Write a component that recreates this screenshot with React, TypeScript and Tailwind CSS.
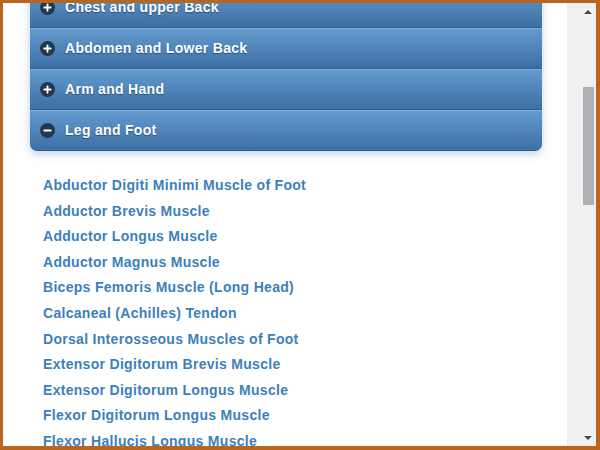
import { Plus, Minus } from "lucide-react";

const regions = [
  { label: "Chest and upper Back", open: false },
  { label: "Abdomen and Lower Back", open: false },
  { label: "Arm and Hand", open: false },
  { label: "Leg and Foot", open: true },
];

const muscles = [
  "Abductor Digiti Minimi Muscle of Foot",
  "Adductor Brevis Muscle",
  "Adductor Longus Muscle",
  "Adductor Magnus Muscle",
  "Biceps Femoris Muscle (Long Head)",
  "Calcaneal (Achilles) Tendon",
  "Dorsal Interosseous Muscles of Foot",
  "Extensor Digitorum Brevis Muscle",
  "Extensor Digitorum Longus Muscle",
  "Flexor Digitorum Longus Muscle",
  "Flexor Hallucis Longus Muscle",
];

function RegionHeader({ label, open, last }: { label: string; open: boolean; last: boolean }) {
  return (
    <div
      className={`flex items-center h-[41px] pl-[10px] border-t border-t-[#7fb0dc] border-b border-b-[#2f5f8f] bg-gradient-to-b from-[#639bcf] to-[#3d6fa3] ${
        last ? "rounded-b-[7px]" : ""
      }`}
    >
      <span className="flex items-center justify-center w-[15px] h-[15px] rounded-full bg-[#22374f]">
        {open ? (
          <Minus size={11} strokeWidth={4} color="#ffffff" />
        ) : (
          <Plus size={11} strokeWidth={4} color="#ffffff" />
        )}
      </span>
      <span className="ml-[10px] text-[14px] tracking-[0.3px] font-bold text-white [text-shadow:0_1px_1px_rgba(20,45,80,0.6)]">
        {label}
      </span>
    </div>
  );
}

export default function App() {
  return (
    <div
      className="w-[600px] h-[450px] flex bg-white border-t-[3px] border-l-[3px] border-r-[4px] border-b-[4px] border-[#b9651f] overflow-hidden"
      style={{ fontFamily: '"Liberation Sans", Arial, sans-serif' }}
    >
      <div className="flex-1 overflow-hidden">
        <div className="-mt-[16px] ml-[27px] mr-[25px] rounded-b-[7px] shadow-[0_3px_8px_rgba(70,120,180,0.35)]">
          {regions.map((r, i) => (
            <RegionHeader key={r.label} label={r.label} open={r.open} last={i === regions.length - 1} />
          ))}
        </div>
        <ul className="mt-[22px] pl-[40px]">
          {muscles.map((m) => (
            <li key={m} className="h-[25.6px] leading-[25.6px] text-[14px] tracking-[0.3px] font-bold text-[#3c7fbc]">
              {m}
            </li>
          ))}
        </ul>
      </div>

      {/* scrollbar */}
      <div className="w-[29px] h-full flex flex-col items-center pl-[15px] pr-[3px] bg-[#f1f1f1] border-l border-l-[#ececec]">
        <div className="mt-[7px] w-0 h-0 border-x-[4px] border-x-transparent border-b-[4px] border-b-[#4a4a4a]" />
        <div className="mt-[73px] w-[11px] h-[118px] bg-[#b0b0b4]" />
        <div className="mt-auto mb-[6px] w-0 h-0 border-x-[4px] border-x-transparent border-t-[4px] border-t-[#4a4a4a]" />
      </div>
    </div>
  );
}
